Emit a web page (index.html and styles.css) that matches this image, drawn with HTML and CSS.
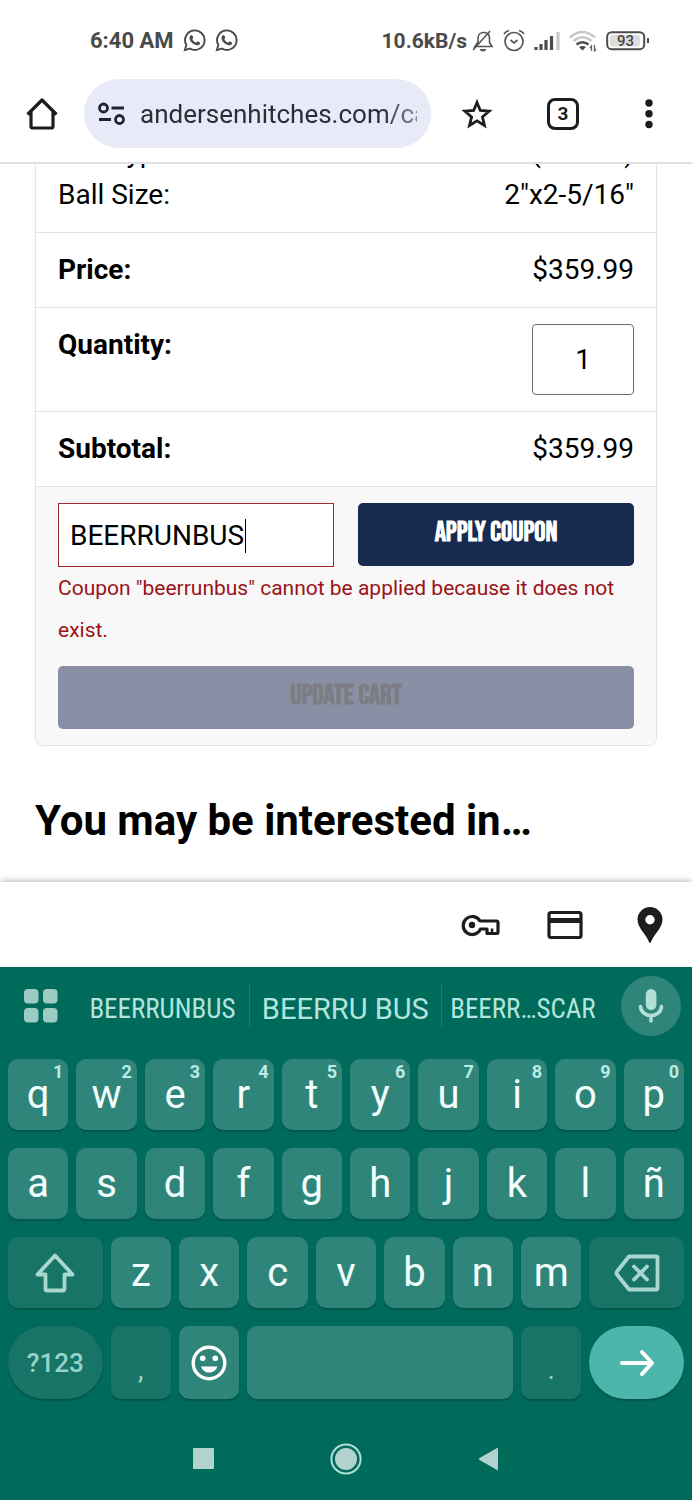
FILE: index.html
```html
<!DOCTYPE html>
<html lang="en">
<head>
<meta charset="utf-8">
<meta name="viewport" content="width=device-width, initial-scale=1">
<title>Cart</title>
<link rel="stylesheet" href="styles.css">
</head>
<body>
<div class="screen">
  <header class="top">
    <div class="status">
      <div class="status-group">
        <span>6:40 AM</span>
        <svg class="chat" width="23" height="23" viewBox="0 0 24 24"><use href="#whatsapp"/></svg>
        <svg class="chat" width="23" height="23" viewBox="0 0 24 24"><use href="#whatsapp"/></svg>
      </div>
      <div class="status-group status-right">
        <span>10.6kB/s</span>
        <svg width="22" height="24" viewBox="0 0 22 24" fill="none" stroke="#555" stroke-width="1.6"><path d="M4.500 17.500h15.500l-2.500-4V9c0-3-2-5-5-5.500-4-.5-6.500 2-6.500 5.500v4l-4 6M1 21L18 2"/><path d="M8 20h6a3 2.500 0 0 1-6 0z" fill="#555" stroke="none"/></svg>
        <svg class="alarm" width="22" height="23" viewBox="0 0 22 23" fill="none" stroke="#555" stroke-width="1.700"><circle cx="11" cy="12.500" r="9"/><path d="M1 5Q2.500 2.500 6 1.500M21 5Q19.500 2.500 16 1.500M7.500 11l3.500 3 3.500-3"/></svg>
        <svg class="signal" width="26" height="20" viewBox="0 0 26 20" stroke-width="3.200"><path stroke="#4c4c4c" d="M2 19v-3M7 19v-6M12 19V9M17.500 19V5"/><path stroke="#c8c8c8" d="M24 19V1"/></svg>
        <svg class="wifi" width="28" height="22" viewBox="0 0 28 22" fill="none" stroke-width="2.600"><g stroke="#c8c8c8"><path d="M1 7.500q12-11 25 0"/><path d="M4.500 11q9-7.500 18 0"/></g><path stroke="#4c4c4c" d="M7.500 14.500q6-4.500 12 0"/><path d="M10 17q3.500-2 7 0l-3.500 3.500z" fill="#4c4c4c"/><path stroke="#666" stroke-width="1.300" d="M22.500 21v-5l-1.500 2M25.500 15v6l1.500-2"/></svg>
        <svg class="battery" width="44" height="20" viewBox="0 0 44 20"><rect x="1.200" y="1.200" width="37" height="17" rx="4.500" fill="#fff" stroke="#4c4c4c" stroke-width="2"/><rect x="4" y="4" width="30" height="11.500" rx="2" fill="#ddd"/><path d="M42 7v5" stroke="#4c4c4c" stroke-width="2"/><text x="19.500" y="15" text-anchor="middle" class="battery-text">93</text></svg>
      </div>
    </div>
    <nav class="toolbar" aria-label="Browser">
      <button class="tool" aria-label="Home"><svg width="32" height="34" viewBox="0 0 32 34" fill="none" stroke="#1d1d1f" stroke-width="3.200" stroke-linejoin="round"><path d="M1.500 17.500L16 3l14.500 14.500M5 15v14.500a1.500 1.500 0 0 0 1.500 1.500h19a1.500 1.500 0 0 0 1.500-1.500V15"/></svg></button>
      <div class="pill">
        <svg width="27" height="24" viewBox="0 0 27 24" fill="none" stroke="#1f2430" stroke-width="2.800"><circle cx="5.500" cy="6" r="4"/><path d="M13.500 6H26M1 17.500h12"/><circle cx="21.500" cy="17.500" r="4"/></svg>
        <input class="url" aria-label="Address" value="andersenhitches.com/cart" readonly>
      </div>
      <button class="tool" aria-label="Bookmark"><svg width="32" height="32" viewBox="0 0 32 32" fill="none" stroke="#1d1d1f" stroke-width="2.800"><path d="M16 4.500l3.300 8 8.800.7-6.700 5.700 2.100 8.600-7.500-4.600-7.500 4.600 2.100-8.600-6.700-5.700 8.800-.7z"/></svg></button>
      <button class="tool" aria-label="Tabs"><span class="tabs">3</span></button>
      <button class="tool" aria-label="Menu"><svg width="8" height="30" viewBox="0 0 8 30" fill="#1d1d1f"><circle cx="4" cy="4" r="3.700"/><circle cx="4" cy="14.800" r="3.700"/><circle cx="4" cy="25.500" r="3.700"/></svg></button>
    </nav>
  </header>

  <main class="page">
    <section class="cart">
      <dl class="lines">
        <div class="line details">
          <dt>Ball Type:<br>Ball Size:</dt>
          <dd>(2 Balls)<br>2"x2-5/16"</dd>
        </div>
        <div class="line"><dt class="strong">Price:</dt><dd>$359.99</dd></div>
        <div class="line"><dt class="strong"><label for="qty">Quantity:</label></dt><dd><input id="qty" class="qty" type="text" inputmode="numeric" value="1"></dd></div>
        <div class="line"><dt class="strong">Subtotal:</dt><dd>$359.99</dd></div>
      </dl>
      <form class="actions">
        <div class="coupon">
          <div class="field">
            <input class="code" type="text" aria-label="Coupon code" value="BEERRUNBUS">
            <span class="caret"></span>
          </div>
          <button class="btn" type="button">APPLY COUPON</button>
        </div>
        <p class="error">Coupon "beerrunbus" cannot be applied because it does not exist.</p>
        <button class="btn update" type="button" disabled>UPDATE CART</button>
      </form>
    </section>
    <h2 class="heading">You may be interested in…</h2>
  </main>

  <div class="autofill">
    <button class="tool" aria-label="Passwords"><svg width="40" height="24" viewBox="0 0 40 24" fill="none" stroke="#1d1d1f" stroke-width="3.200" stroke-linejoin="round"><path d="M20 8h16.500a1.500 1.500 0 0 1 1.500 1.500V19a1.500 1.500 0 0 1-1.500 1.500H27V16h-6.500A9 9 0 1 1 20 8z"/><circle cx="12" cy="12" r="3.200" fill="#1d1d1f" stroke="none"/><path stroke-width="2.600" d="M32 15.500V20"/></svg></button>
    <button class="tool" aria-label="Payment methods"><svg width="36" height="30" viewBox="0 0 36 30" fill="none" stroke="#1d1d1f" stroke-width="3.200"><rect x="2" y="2.500" width="32" height="25" rx="2"/><path stroke-width="5" d="M2 10.500h32"/></svg></button>
    <button class="tool" aria-label="Addresses"><svg width="26" height="36" viewBox="0 0 26 36" fill="#1d1d1f" fill-rule="evenodd"><path d="M13 0A12.500 12.500 0 0 1 25.500 12.500C25.500 21 17 27 14 35q-1 2-2 0C9 27 .5 21 .5 12.500A12.500 12.500 0 0 1 13 0zm0 8a4.700 4.700 0 1 0 0 9.400A4.700 4.700 0 0 0 13 8z"/></svg></button>
  </div>

  <section class="keyboard" aria-label="Keyboard">
    <div class="suggest">
      <button class="apps" aria-label="Keyboard menu"><svg width="34" height="34" viewBox="0 0 34 34" fill="#9ccbc3"><rect width="14.500" height="14.500" rx="4"/><rect x="19" width="14.500" height="14.500" rx="4"/><rect y="19" width="14.500" height="14.500" rx="4"/><rect x="19" y="19" width="14.500" height="14.500" rx="4"/></svg></button>
      <button class="word">BEERRUNBUS</button>
      <button class="word wide">BEERRU BUS</button>
      <button class="word">BEERR…SCAR</button>
      <button class="mic" aria-label="Voice input"><svg width="26" height="36" viewBox="0 0 26 36" fill="none" stroke="#b2e0d8" stroke-width="3.600" stroke-linecap="round"><rect x="7.800" y="1" width="10.600" height="21" rx="5.300" fill="#b2e0d8" stroke="none"/><path d="M2.500 18.500c.5 5.500 5 9 10.500 9s10-3.500 10.500-9M13 28v5"/></svg></button>
    </div>
    <div class="keys">
      <button class="key">q<sup>1</sup></button><button class="key">w<sup>2</sup></button><button class="key">e<sup>3</sup></button><button class="key">r<sup>4</sup></button><button class="key">t<sup>5</sup></button><button class="key">y<sup>6</sup></button><button class="key">u<sup>7</sup></button><button class="key">i<sup>8</sup></button><button class="key">o<sup>9</sup></button><button class="key">p<sup>0</sup></button>
      <button class="key">a</button><button class="key">s</button><button class="key">d</button><button class="key">f</button><button class="key">g</button><button class="key">h</button><button class="key">j</button><button class="key">k</button><button class="key">l</button><button class="key">ñ</button>
      <button class="key dim side" aria-label="Shift"><svg width="40" height="40" viewBox="0 0 40 40" fill="none" stroke="#a9d6ce" stroke-width="3.800" stroke-linejoin="round"><path d="M20 2.500L2.500 21.500H10.500V36a1.500 1.500 0 0 0 1.500 1.500h16a1.500 1.500 0 0 0 1.500-1.500V21.500h8z"/></svg></button>
      <button class="key">z</button><button class="key">x</button><button class="key">c</button><button class="key">v</button><button class="key">b</button><button class="key">n</button><button class="key">m</button>
      <button class="key dim side" aria-label="Backspace"><svg width="46" height="38" viewBox="0 0 46 38" fill="none" stroke="#a9d6ce" stroke-width="3.800" stroke-linejoin="round"><path d="M15 2.500h27a1.500 1.500 0 0 1 1.500 1.500v30a1.500 1.500 0 0 1-1.500 1.500H15L3 20.500q-1-1.500 0-3z"/><path stroke-linecap="round" d="M20 12.500l13 13M33 12.500l-13 13"/></svg></button>
      <button class="key dim side round symbols">?123</button>
      <button class="key dim punct">,</button>
      <button class="key" aria-label="Emoji"><svg width="36" height="36" viewBox="0 0 36 36" fill="none" stroke="#fff" stroke-width="3.400"><circle cx="18" cy="18" r="15.800"/><g fill="#fff" stroke="none"><circle cx="11.700" cy="13.300" r="2.800"/><circle cx="24.300" cy="13.300" r="2.800"/><path d="M10 21.500h16.500c-1.500 4-4.500 6-8.300 6s-6.700-2-8.200-6z"/></g></svg></button>
      <button class="key space" aria-label="Space"></button>
      <button class="key dim punct">.</button>
      <button class="key side round go" aria-label="Go"><svg width="36" height="28" viewBox="0 0 36 28" fill="none" stroke="#fff" stroke-width="4" stroke-linecap="round" stroke-linejoin="round"><path d="M3 14h30M23 3l10 11-10 11"/></svg></button>
    </div>
    <nav class="system" aria-label="System">
      <button aria-label="Recents"><svg width="21" height="21" viewBox="0 0 21 21"><rect width="21" height="21" rx="1" fill="#b2d3cd"/></svg></button>
      <button aria-label="Home screen"><svg width="32" height="32" viewBox="0 0 32 32"><circle cx="16" cy="16" r="14.600" fill="none" stroke="#b2e0d8" stroke-width="2"/><circle cx="16" cy="16" r="11" fill="#b2d3cd"/></svg></button>
      <button aria-label="Back"><svg width="20" height="24" viewBox="0 0 20 24"><path d="M19 .500V23.500L.500 13q-1-1 0-2z" fill="#b2d3cd"/></svg></button>
    </nav>
  </section>
</div>
<svg class="defs" width="0" height="0" aria-hidden="true"><symbol id="whatsapp" viewBox="0 0 24 24"><path fill="none" stroke="#4c4c4c" stroke-width="2" d="M2 22l1.500-5.300A10.200 10.200 0 1 1 7.300 20.500z"/><path fill="#4c4c4c" d="M8.300 6.500c.7-.3 1.300-.2 1.600.5l.8 1.900c.2.500-.9 1.400-.9 1.700.9 1.800 2.300 3 4 3.600.5 0 1.100-1.500 1.600-1.300l2.200 1.100c.6.4 0 1.800-.7 2.400-1.500 1-3.400.6-5.200-.4-2-1.100-3.700-2.900-4.600-4.900-.7-1.700-.3-3.700 1.200-4.600z"/></symbol></svg>
</body>
</html>
```
FILE: styles.css
```css
* {
  box-sizing: border-box;
}

body {
  margin: 0;
  background: #fff;
  color: #000;
  font-family: Roboto, "Liberation Sans", sans-serif;
  font-size: 28px;
  line-height: 42px;
}

button,
input {
  margin: 0;
  padding: 0;
  border: 0;
  background: none;
  color: inherit;
  font: inherit;
}

svg {
  display: block;
  flex: none;
}

.defs {
  position: absolute;
}

.screen {
  display: flex;
  flex-direction: column;
  min-height: 100vh;
}

/* Status bar and browser toolbar */

.top {
  border-bottom: 2px solid #dfdfe8;
}

.status {
  display: flex;
  justify-content: space-between;
  align-items: center;
  height: 79px;
  padding: 2px 42px 0 90px;
  color: #4a4a4a;
  font-size: 22px;
  font-weight: 700;
}

.status-group {
  display: flex;
  align-items: center;
  gap: 9px;
}

.status-right {
  font-size: 21px;
}

.status-right span {
  margin-right: -4px;
}

.battery-text {
  fill: #444;
  font-size: 15px;
  font-weight: 500;
}

.toolbar {
  display: flex;
  align-items: center;
  padding-bottom: 14px;
}

.tool {
  display: flex;
  flex: none;
  justify-content: center;
  align-items: center;
  width: 85px;
  height: 69px;
}

.toolbar .tool {
  width: 86px;
}

.toolbar .tool:first-child {
  width: 84px;
}

.pill {
  display: flex;
  flex: 1;
  align-items: center;
  gap: 15px;
  min-width: 0;
  height: 69px;
  margin-right: 3px;
  padding: 0 14px;
  border-radius: 35px;
  background: #e8ebf7;
}

.url {
  flex: 1;
  min-width: 0;
  color: #2a2e38;
  font-size: 26px;
  -webkit-mask-image: linear-gradient(to left, rgba(0, 0, 0, 0.5), #000 36px);
  mask-image: linear-gradient(to left, rgba(0, 0, 0, 0.5), #000 36px);
}

.tabs {
  width: 32px;
  height: 32px;
  border: 3px solid #1d1d1f;
  border-radius: 8px;
  color: #1d1d1f;
  font-size: 19px;
  font-weight: 700;
  line-height: 26px;
  text-align: center;
}

/* Cart */

.page {
  overflow: hidden;
  padding: 0 35px 32px;
}

.cart {
  overflow: hidden;
  border: 1px solid #e4e4e6;
  border-top: 0;
  border-radius: 0 0 8px 8px;
}

.lines {
  margin: 0;
}

.line {
  display: flex;
  justify-content: space-between;
  padding: 16px 22px;
  border-bottom: 1px solid #e4e4e6;
}

.details {
  margin-top: -48px;
}

.line dd {
  margin: 0;
  text-align: right;
}

.strong {
  font-weight: 700;
}

.qty {
  display: block;
  width: 102px;
  height: 71px;
  border: 1px solid #6b6b6b;
  border-radius: 4px;
  text-align: center;
}

.actions {
  padding: 16px 22px;
  background: #f8f8f8;
}

.coupon {
  display: grid;
  grid-template-columns: 1fr 1fr;
  gap: 24px;
  align-items: start;
}

.field {
  position: relative;
}

.code {
  display: block;
  width: 100%;
  height: 64px;
  padding: 0 11px;
  border: 1px solid #a3282c;
  background: #fff;
}

.caret {
  position: absolute;
  top: 16px;
  left: 187px;
  width: 1px;
  height: 34px;
  background: #000;
}

.btn {
  height: 63px;
  padding-bottom: 4px;
  border-radius: 5px;
  background: #172a50;
  color: #fff;
  font-family: "Bebas Neue", "Roboto Condensed", "Liberation Sans Narrow", Roboto, sans-serif;
  font-size: 28px;
  font-weight: 700;
}

.error {
  margin: 0 0 15px;
  color: #9b1216;
  font-size: 21px;
}

.update {
  width: 100%;
  background: #8990a6;
  color: #7c7d82;
}

.heading {
  margin: 48px 0 0;
  font-size: 42px;
  font-weight: 700;
  line-height: 54px;
}

/* Autofill bar */

.autofill {
  display: flex;
  justify-content: flex-end;
  align-items: center;
  height: 85px;
  margin-top: auto;
  background: #fff;
  box-shadow: 0 -1px 6px rgba(0, 0, 0, 0.3);
}

/* Keyboard */

.keyboard {
  position: relative;
  background: #006a5b;
}

.suggest {
  display: grid;
  grid-template-columns: 76px 18fr 20fr 17fr 88px;
  align-items: center;
  height: 78px;
}

.apps {
  padding-left: 24px;
}

.word {
  height: 42px;
  padding-top: 3px;
  color: #b2e5dc;
  font-family: "Roboto Condensed", "Liberation Sans Narrow", Roboto, sans-serif;
  font-size: 27px;
  white-space: nowrap;
}

.word + .word {
  border-left: 1px solid #1b7c6f;
}

.wide {
  font-family: Roboto, sans-serif;
  font-size: 29px;
}

.mic {
  display: flex;
  justify-content: center;
  align-items: center;
  justify-self: end;
  width: 60px;
  height: 60px;
  margin-right: 11px;
  border-radius: 50%;
  background: #30857a;
}

.keys {
  display: grid;
  grid-template-columns: repeat(20, 1fr);
  grid-template-rows: 71px 71px 71px 73px;
  gap: 18px 8px;
  padding: 14px 8px 0;
}

.key {
  display: flex;
  position: relative;
  grid-column: span 2;
  justify-content: center;
  align-items: center;
  border-radius: 10px;
  background: #30857a;
  box-shadow: 0 2px 1px rgba(0, 70, 60, 0.5);
  color: #f2fffc;
  font-size: 40px;
}

.key sup {
  position: absolute;
  top: 3px;
  right: 5px;
  color: #b9ece4;
  font-size: 18px;
  font-weight: 700;
  line-height: 20px;
}

.side {
  grid-column: span 3;
}

.dim {
  background: #177467;
  color: #96d3c8;
}

.round {
  border-radius: 37px;
}

.symbols {
  font-size: 26px;
  font-weight: 500;
}

.punct {
  align-items: flex-end;
  padding-bottom: 8px;
  font-size: 28px;
}

.space {
  grid-column: span 8;
}

.go {
  background: #4db6ac;
}

.system {
  display: flex;
  justify-content: center;
  align-items: center;
  height: 101px;
  padding-top: 18px;
}

.system button {
  display: flex;
  justify-content: center;
  width: 143px;
}
```
